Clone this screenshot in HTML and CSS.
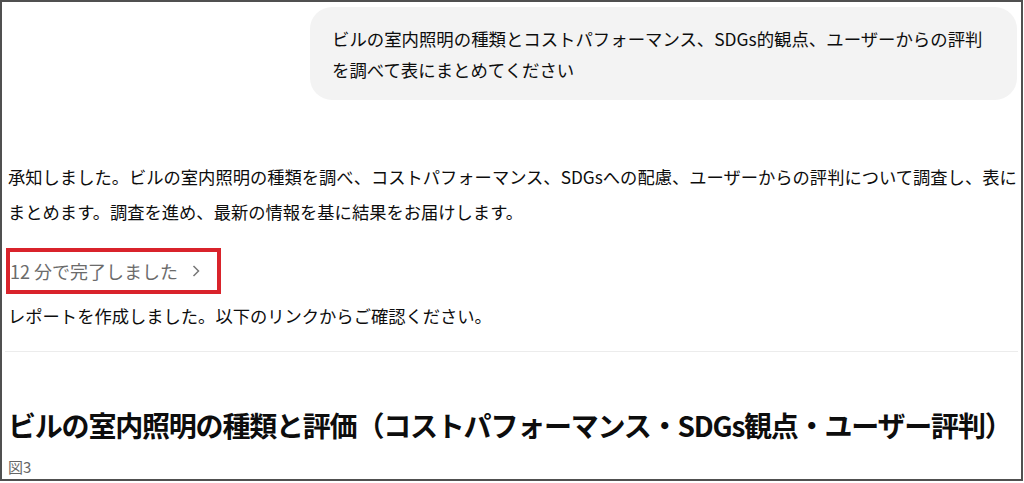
FILE: index.html
```html
<!DOCTYPE html>
<html lang="ja">
<head>
<meta charset="utf-8">
<link rel="stylesheet" href="styles.css">
</head>
<body>
<div class="frame">
  <div class="user-row">
    <div class="bubble">ビルの室内照明の種類とコストパフォーマンス、SDGs的観点、ユーザーからの評判を調べて表にまとめてください</div>
  </div>
  <p class="answer">承知しました。ビルの室内照明の種類を調べ、コストパフォーマンス、SDGsへの配慮、ユーザーからの評判について調査し、表にまとめます。調査を進め、最新の情報を基に結果をお届けします。</p>
  <div class="status-wrap">
    <span class="status">12 分で完了しました<svg class="chev" width="10" height="14" viewBox="0 0 10 14"><path d="M2.5 2 L7.5 7 L2.5 12" fill="none" stroke="#777" stroke-width="1.5"/></svg></span>
  </div>
  <p class="report">レポートを作成しました。以下のリンクからご確認ください。</p>
  <hr class="sep">
  <h1 class="title">ビルの室内照明の種類と評価（コストパフォーマンス・SDGs観点・ユーザー評判）</h1>
  <div class="caption">図3</div>
</div>
</body>
</html>
```
FILE: styles.css
```css
html, body {
  margin: 0;
  padding: 0;
  background: #ffffff;
}
.frame {
  box-sizing: border-box;
  width: 1023px;
  height: 481px;
  border: 2px solid #505050;
  padding: 0 4px 0 6px;
  overflow: hidden;
  font-family: "Noto Sans CJK JP", "Noto Sans", sans-serif;
  color: #0d0d0d;
}
.user-row {
  display: flex;
  justify-content: flex-end;
  padding-top: 5px;
}
.bubble {
  box-sizing: border-box;
  width: 707px;
  height: 93px;
  background: #f3f3f3;
  border-radius: 22px;
  padding: 16px 20px 0 22px;
  font-size: 17.4px;
  line-height: 31px;
}
.answer {
  margin: 59px 0 0 0;
  font-size: 17.3px;
  line-height: 35px;
}
.status-wrap {
  margin-top: 19px;
  height: 46px;
}
.status {
  display: inline-flex;
  align-items: center;
  gap: 13px;
  box-sizing: border-box;
  height: 46px;
  margin-left: -2px;
  padding: 0 16px 0 0;
  border: 4px solid #d9232b;
  color: #6b6b6b;
  font-size: 18px;
}
.chev {
  display: block;
}
.report {
  margin: 4px 0 0 0;
  font-size: 17.3px;
  line-height: 35px;
}
.sep {
  margin: 18px -1px 0 -3px;
  border: 0;
  border-top: 1px solid #ececec;
  height: 0;
}
.title {
  margin: 53px 0 0 0;
  font-size: 28px;
  letter-spacing: -1.2px;
  line-height: 40px;
  font-weight: 700;
  white-space: nowrap;
}
.caption {
  margin-top: 12px;
  font-size: 15px;
  color: #666666;
  line-height: 20px;
}
```
